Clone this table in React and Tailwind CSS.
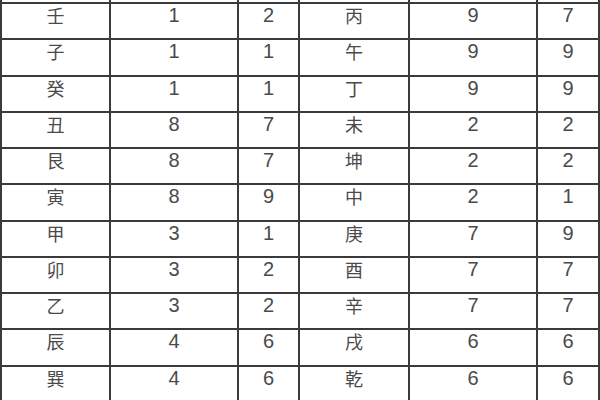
import React from "react";

const rows = [
  ["壬", "1", "2", "丙", "9", "7"],
  ["子", "1", "1", "午", "9", "9"],
  ["癸", "1", "1", "丁", "9", "9"],
  ["丑", "8", "7", "未", "2", "2"],
  ["艮", "8", "7", "坤", "2", "2"],
  ["寅", "8", "9", "中", "2", "1"],
  ["甲", "3", "1", "庚", "7", "9"],
  ["卯", "3", "2", "酉", "7", "7"],
  ["乙", "3", "2", "辛", "7", "7"],
  ["辰", "4", "6", "戌", "6", "6"],
  ["巽", "4", "6", "乾", "6", "6"],
];

const Cell = ({ value, han }) => (
  <div
    className={`bg-white h-[34.25px] flex justify-center items-start leading-[20px] pt-[1px] text-[#4a4a4a] ${
      han
        ? "text-[18px] font-['Noto_Sans_CJK_SC',sans-serif]"
        : "text-[20px] font-['Liberation_Sans',Arial,sans-serif]"
    }`}
  >
    {value}
  </div>
);

const App = () => {
  return (
    <div className="w-[600px] h-[400px] overflow-hidden bg-white">
      <div className="-mt-[32.25px] grid grid-cols-[107px_126px_59px_108px_126px_60px] gap-[2px] px-[2px] bg-[#3a3a3a]">
        {Array.from({ length: 6 }).map((_, i) => (
          <div key={"top" + i} className="bg-white h-[34.25px]" />
        ))}
        {rows.map((row, r) =>
          row.map((value, c) => (
            <Cell key={r + "-" + c} value={value} han={c === 0 || c === 3} />
          ))
        )}
      </div>
    </div>
  );
};

export default App;
